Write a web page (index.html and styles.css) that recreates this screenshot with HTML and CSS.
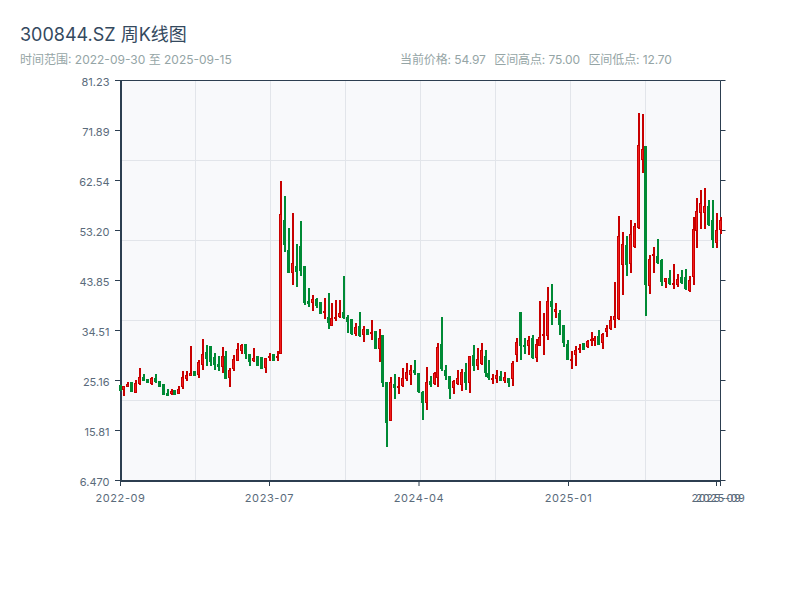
FILE: index.html
```html
<!DOCTYPE html>
<html>
<head>
    <meta charset="UTF-8">
    <title>300844.SZ 周K线图</title>
    <link rel="stylesheet" href="styles.css">
</head>
<body>
    <header class="chart-header">
        <h1 class="chart-title">300844.SZ 周K线图</h1>
        <div class="chart-meta">
            <span>时间范围: 2022-09-30 至 2025-09-15</span>
            <div class="chart-stats">
                <span>当前价格: 54.97</span>
                <span>区间高点: 75.00</span>
                <span>区间低点: 12.70</span>
            </div>
        </div>
    </header>

    <svg id="chart" class="chart" viewBox="0 70 800 530" width="800" height="530"></svg>

    <script src="chart.js"></script>
</body>
</html>
```

FILE: styles.css
```css
* {
    box-sizing: border-box;
    margin: 0;
    padding: 0;
}

body {
    width: 800px;
    height: 600px;
    overflow: hidden;
    background-color: #fff;
    font-family: 'Inter', 'Noto Sans CJK SC', sans-serif;
}

.chart-header {
    height: 70px;
    padding: 23px 20px 0;
}

.chart-title {
    font-size: 18px;
    font-weight: 400;
    line-height: 24px;
    color: #34495e;
}

.chart-meta {
    display: grid;
    grid-template-columns: 380px 1fr;
    margin-top: 5px;
    font-size: 12px;
    line-height: 16px;
    color: #95a5a6;
}

.chart-stats {
    display: flex;
    gap: 8.5px;
    letter-spacing: -0.1px;
}

.chart {
    display: block;
}

.plot-bg {
    fill: #f8f9fb;
}

.grid-line {
    stroke: #e2e5ea;
    stroke-width: 1;
}

.axis-line {
    stroke: #2c3e50;
    stroke-width: 1;
}

.axis-line.heavy {
    stroke-width: 2;
}

.axis-label {
    font-size: 11px;
    fill: #5a6b7b;
}

.axis-label.date {
    letter-spacing: 0.6px;
}

.candle-up {
    fill: #c80000;
}

.candle-up-body {
    fill: #f01c1c;
    stroke: #c80000;
    stroke-width: 1;
}

.candle-down {
    fill: #008a35;
}
```

FILE: chart.js
```js
const SVG_NS = 'http://www.w3.org/2000/svg';
const chart = document.getElementById('chart');

const PLOT = { left: 121, right: 720.5, top: 80.5, bottom: 481 };
const STEP = 3.925;

const yLabels = ['81.23', '71.89', '62.54', '53.20', '43.85', '34.51', '25.16', '15.81', '6.470'];
const xLabels = [[120.5, '2022-09'], [269.5, '2023-07'], [419, '2024-04'], [568.5, '2025-01'], [716.5, '2025-09'], [720.5, '2025-09']];

// top of wick, top of body, bottom of body, bottom of wick (pixels), 1 = up week
const candles = [
    [385,385,391,391,0], [386,386,390,396,1], [382,384,387,387,1], [382,382,392,392,0],
    [380,383,393,393,1], [368,377,384,385,1], [374,377,381,381,0], [379,379,383,383,0],
    [377,378,384,385,1], [374,378,382,383,0], [381,381,387,387,0], [384,384,395,395,0],
    [389,393,396,396,0], [389,391,394,395,1], [390,390,395,395,0], [386,389,394,394,1],
    [371,377,387,389,1], [371,375,379,381,1], [346,373,376,376,1], [371,371,376,376,0],
    [360,362,375,378,1], [339,354,365,370,1], [345,352,359,366,0], [346,346,362,366,0],
    [353,357,365,370,0], [356,364,367,371,0], [347,356,367,373,1], [351,356,379,379,0],
    [368,370,378,387,1], [355,359,369,371,1], [343,349,361,361,1], [344,345,351,354,1],
    [344,344,354,359,0], [354,354,362,366,0], [348,358,361,362,1], [356,356,366,366,0],
    [357,357,369,369,0], [358,358,368,373,1], [353,356,358,361,1], [354,354,361,361,0],
    [351,356,358,361,1], [181,214,354,354,1], [196,220,245,252,0], [228,250,273,273,0],
    [213,263,273,285,1], [244,266,272,287,0], [221,246,271,276,0], [266,266,303,305,0],
    [288,301,304,307,0], [295,299,303,311,1], [298,299,306,308,0], [302,302,314,314,0],
    [298,311,313,319,1], [293,317,323,329,0], [303,318,326,326,1], [300,317,319,321,1],
    [300,313,317,318,1], [276,312,318,319,0], [315,317,322,333,0], [319,319,334,335,0],
    [323,327,334,336,1], [312,326,336,337,0], [326,329,335,342,1], [329,329,335,335,0],
    [320,332,333,340,1], [331,331,349,349,0], [329,338,349,362,1], [335,335,383,387,0],
    [382,382,423,447,0], [377,382,421,421,1], [374,384,388,399,0], [377,386,388,394,1],
    [368,378,386,387,1], [363,372,379,381,1], [365,370,375,385,1], [360,370,373,375,0],
    [373,373,392,393,0], [391,392,403,420,0], [367,382,403,410,1], [376,381,385,387,0],
    [372,373,384,385,1], [343,347,378,387,1], [317,344,369,371,0], [365,370,376,380,0],
    [376,376,389,399,0], [380,381,388,394,1], [370,378,384,385,1], [369,372,385,391,1],
    [363,372,383,390,0], [356,356,383,393,1], [345,355,366,371,0], [348,359,366,370,1],
    [343,350,364,365,1], [350,356,373,377,0], [360,373,378,380,0], [374,378,379,384,1],
    [370,375,379,383,1], [371,376,381,381,0], [372,377,381,383,1], [378,378,383,387,0],
    [361,363,379,386,1], [338,342,355,362,1], [312,312,346,360,0], [338,345,347,354,0],
    [336,340,346,355,1], [335,338,358,359,0], [339,344,358,362,1], [301,337,346,346,1],
    [313,334,336,355,1], [287,301,336,340,1], [284,301,307,325,0], [303,309,312,318,1],
    [310,313,325,335,0], [325,325,343,347,0], [340,344,360,360,0], [351,359,360,369,1],
    [346,350,355,366,1], [344,348,349,353,1], [343,343,350,350,0], [340,341,347,348,1],
    [332,339,341,346,1], [336,338,341,346,1], [330,336,345,345,0], [333,334,343,349,1],
    [325,328,332,337,1], [316,320,329,330,1], [282,316,320,328,1], [216,236,319,320,1],
    [232,244,265,295,1], [236,245,265,276,0], [220,234,264,273,1], [223,226,247,248,1],
    [113,145,228,229,1], [114,149,160,173,1], [146,146,285,316,0], [255,259,286,294,1],
    [247,254,256,273,1], [239,256,263,264,0], [259,260,282,286,0], [278,278,282,288,1],
    [270,278,284,285,0], [264,283,284,289,1], [274,279,285,287,1], [270,277,283,284,0],
    [269,277,289,290,0], [276,280,291,292,1], [217,229,277,285,1], [198,211,231,248,1],
    [190,203,213,229,1], [188,206,213,229,1], [200,206,225,226,0], [200,220,240,248,0],
    [213,230,243,248,1], [217,220,230,234,1]
];

function add(tag, attrs, text) {
    const el = document.createElementNS(SVG_NS, tag);
    for (const key in attrs) {
        el.setAttribute(key, attrs[key]);
    }
    if (text) el.textContent = text;
    chart.appendChild(el);
    return el;
}

function line(x1, y1, x2, y2, cls) {
    add('line', { x1, y1, x2, y2, class: cls });
}

function drawFrame() {
    add('rect', {
        x: PLOT.left, y: PLOT.top,
        width: PLOT.right - PLOT.left, height: PLOT.bottom - PLOT.top,
        class: 'plot-bg'
    });

    for (let x = 195.5; x < 700; x += 75) line(x, PLOT.top, x, PLOT.bottom, 'grid-line');
    for (let y = 160.5; y < 450; y += 80) line(PLOT.left, y, PLOT.right, y, 'grid-line');

    yLabels.forEach(function(label, i) {
        const y = 80.5 + i * 50;
        line(115, y, 121, y, 'axis-line');
        line(720.5, y, 725.5, y, 'axis-line');
        add('text', { x: 109.5, y: y + 5, 'text-anchor': 'end', class: 'axis-label' }, label);
    });

    xLabels.forEach(function(item) {
        line(item[0], 481, item[0], 486, 'axis-line');
        add('text', { x: item[0], y: 501.5, 'text-anchor': 'middle', class: 'axis-label date' }, item[1]);
    });

    line(121, 80.5, 720.5, 80.5, 'axis-line');
    line(720.5, 80.5, 720.5, 481, 'axis-line');
    line(121, 80, 121, 482, 'axis-line heavy');
    line(120, 481, 721, 481, 'axis-line heavy');
}

function drawCandles() {
    candles.forEach(function(c, i) {
        const left = Math.round(118.5 + i * STEP);
        const up = c[4] === 1;
        add('rect', { x: left + 1, y: c[0], width: 2, height: c[3] - c[0], class: up ? 'candle-up' : 'candle-down' });
        if (up) {
            add('rect', { x: left + 0.5, y: c[1] + 0.5, width: 2, height: Math.max(c[2] - c[1] - 1, 1), class: 'candle-up-body' });
        } else {
            add('rect', { x: left, y: c[1], width: 3, height: c[2] - c[1], class: 'candle-down' });
        }
    });
}

drawFrame();
drawCandles();
```
